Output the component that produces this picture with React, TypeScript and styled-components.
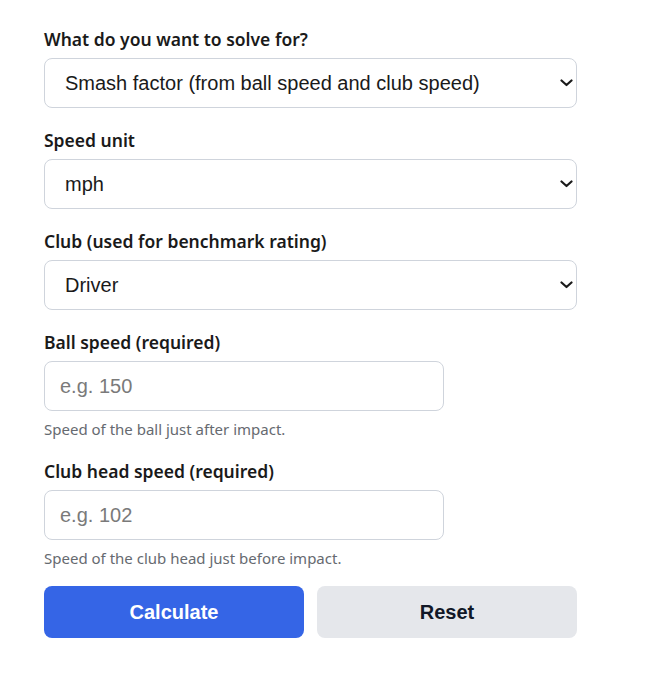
import styled, { createGlobalStyle } from 'styled-components';

const GlobalStyle = createGlobalStyle`
  body {
    margin: 0;
    background: #ffffff;
    font-family: 'Noto Sans', sans-serif;
  }
`;

const Form = styled.form`
  width: 533px;
  padding: 27px 0 0 44px;
  display: flex;
  flex-direction: column;
  gap: 20px;
`;

const Group = styled.div`
  display: flex;
  flex-direction: column;
`;

const Label = styled.label`
  font-family: 'Noto Sans', sans-serif;
  font-size: 17.5px;
  font-weight: 600;
  line-height: 25px;
  color: #1a1a1a;
  margin-bottom: 6px;
`;

const fieldBase = `
  box-sizing: border-box;
  height: 50px;
  border: 1px solid #cfd4dc;
  border-radius: 8px;
  background: #ffffff;
  font-family: 'Liberation Sans', Arial, sans-serif;
  font-size: 20px;
  color: #1a1a1a;
  outline: none;
`;

const SelectWrap = styled.div`
  position: relative;
  width: 533px;
`;

const Select = styled.select`
  ${fieldBase}
  width: 100%;
  padding: 0 28px 0 20px;
  appearance: none;
  -webkit-appearance: none;
`;

const Chevron = styled.svg`
  position: absolute;
  right: 4px;
  top: 21px;
  width: 13px;
  height: 8px;
  pointer-events: none;
`;

const Input = styled.input`
  ${fieldBase}
  width: 400px;
  padding: 0 15px;

  &::placeholder {
    color: #7a7a7a;
  }
`;

const Help = styled.div`
  margin-top: 8px;
  font-family: 'Noto Sans', sans-serif;
  font-size: 15px;
  line-height: 20px;
  color: #666a70;
`;

const Actions = styled.div`
  display: grid;
  grid-template-columns: 1fr 1fr;
  gap: 13px;
  margin-top: -2px;
`;

const Button = styled.button<{ $primary?: boolean }>`
  height: 52px;
  border: none;
  border-radius: 8px;
  font-family: 'Liberation Sans', Arial, sans-serif;
  font-size: 20px;
  font-weight: 700;
  cursor: pointer;
  background: ${(p) => (p.$primary ? '#3565e6' : '#e5e7eb')};
  color: ${(p) => (p.$primary ? '#ffffff' : '#111827')};
`;

type Option = { value: string; label: string };

const Dropdown: React.FC<{ id: string; options: Option[]; value: string }> = ({ id, options, value }) => (
  <SelectWrap>
    <Select id={id} defaultValue={value}>
      {options.map((o) => (
        <option key={o.value} value={o.value}>
          {o.label}
        </option>
      ))}
    </Select>
    <Chevron viewBox='0 0 13 8'>
      <path d='M1.5 1.5l5 4.5 5-4.5' fill='none' stroke='#1a1a1a' strokeWidth='2.2' strokeLinecap='round' strokeLinejoin='round' />
    </Chevron>
  </SelectWrap>
);

const solveOptions: Option[] = [
  { value: 'smash', label: 'Smash factor (from ball speed and club speed)' },
  { value: 'ball', label: 'Ball speed (from smash factor and club speed)' },
  { value: 'club', label: 'Club speed (from ball speed and smash factor)' },
];

const unitOptions: Option[] = [
  { value: 'mph', label: 'mph' },
  { value: 'kmh', label: 'km/h' },
  { value: 'ms', label: 'm/s' },
];

const clubOptions: Option[] = [
  { value: 'driver', label: 'Driver' },
  { value: 'wood', label: 'Fairway wood' },
  { value: 'hybrid', label: 'Hybrid' },
  { value: 'iron', label: 'Iron' },
  { value: 'wedge', label: 'Wedge' },
];

const App: React.FC = () => {
  return (
    <>
      <GlobalStyle />
      <Form onSubmit={(e) => e.preventDefault()}>
        <Group>
          <Label htmlFor='solve'>What do you want to solve for?</Label>
          <Dropdown id='solve' options={solveOptions} value='smash' />
        </Group>
        <Group>
          <Label htmlFor='unit'>Speed unit</Label>
          <Dropdown id='unit' options={unitOptions} value='mph' />
        </Group>
        <Group>
          <Label htmlFor='club'>Club (used for benchmark rating)</Label>
          <Dropdown id='club' options={clubOptions} value='driver' />
        </Group>
        <Group>
          <Label htmlFor='ball'>Ball speed (required)</Label>
          <Input id='ball' type='text' placeholder='e.g. 150' />
          <Help>Speed of the ball just after impact.</Help>
        </Group>
        <Group>
          <Label htmlFor='head'>Club head speed (required)</Label>
          <Input id='head' type='text' placeholder='e.g. 102' />
          <Help>Speed of the club head just before impact.</Help>
        </Group>
        <Actions>
          <Button type='submit' $primary>
            Calculate
          </Button>
          <Button type='button'>Reset</Button>
        </Actions>
      </Form>
    </>
  );
};

export default App;
